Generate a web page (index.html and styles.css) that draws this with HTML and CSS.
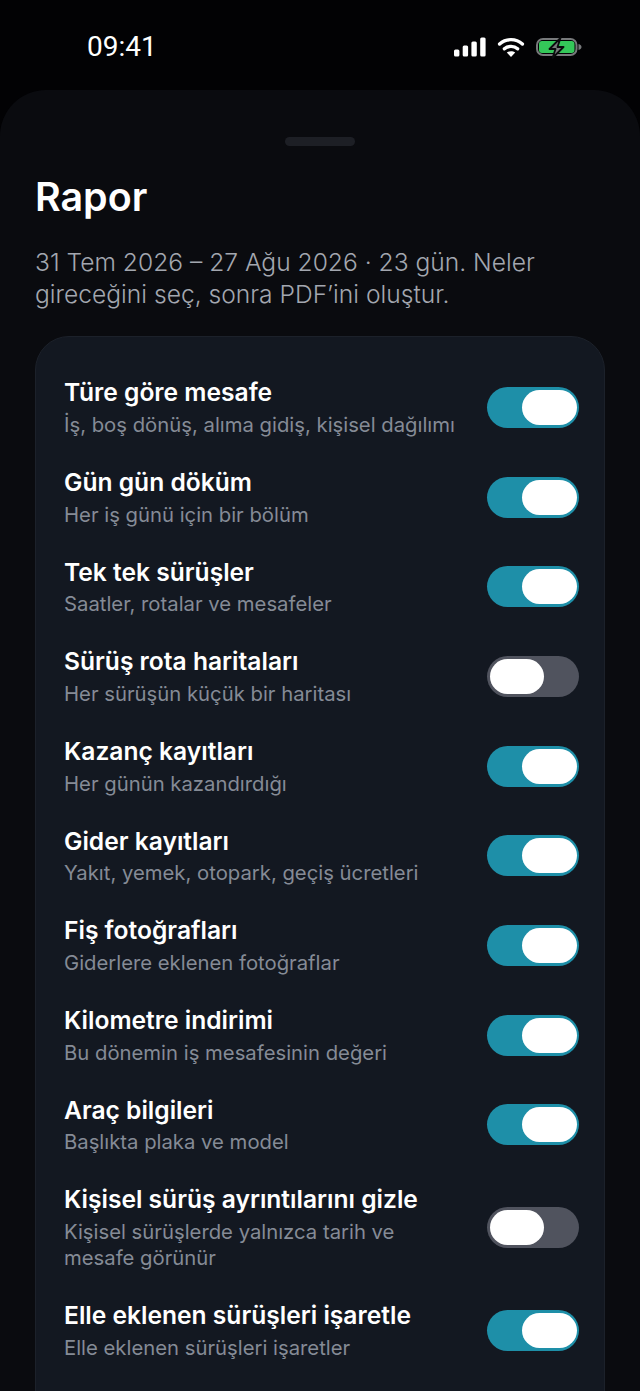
FILE: index.html
```html
<!DOCTYPE html>
<html lang="tr">

<head>
    <meta charset="utf-8">
    <title>Rapor</title>
    <link rel="stylesheet" href="styles.css">
</head>

<body>
    <div class="status-bar">
        <span class="time">09:41</span>
        <div class="status-icons">
            <svg class="ic-signal" width="32" height="20" viewBox="0 0 32 20">
                <rect x="0" y="12.5" width="5.4" height="7" rx="1.5" fill="#fff" />
                <rect x="8.7" y="8.5" width="5.4" height="11" rx="1.5" fill="#fff" />
                <rect x="17.4" y="4.5" width="5.4" height="15" rx="1.5" fill="#fff" />
                <rect x="26.2" y="0.5" width="5.4" height="19" rx="1.5" fill="#fff" />
            </svg>
            <svg class="ic-wifi" width="28" height="20" viewBox="0 0 28 20">
                <path d="M2.6 7 C9 1.2 19 1.2 25.4 7" fill="none" stroke="#fff" stroke-width="3.4" stroke-linecap="round" />
                <path d="M7.4 11.8 C11 8.6 17 8.6 20.6 11.8" fill="none" stroke="#fff" stroke-width="3.4" stroke-linecap="round" />
                <path d="M14 20 L9.8 15.6 C12 13.8 16 13.8 18.2 15.6 Z" fill="#fff" />
            </svg>
            <svg class="ic-battery" width="46" height="22" viewBox="0 0 46 22">
                <rect x="1" y="2" width="39.5" height="16" rx="6" fill="none" stroke="#77797b" stroke-width="2" />
                <rect x="3" y="4" width="35.5" height="12" rx="3" fill="#34c759" />
                <path d="M42.5 7 C44.6 7.5 45.5 8.7 45.5 10 C45.5 11.3 44.6 12.5 42.5 13 Z" fill="#77797b" />
                <path d="M24.5 1 L13.5 12 H19.5 L16.5 21 L27.5 10 H21.5 Z" fill="#77797b" stroke="#0a0b0d" stroke-width="1.8" stroke-linejoin="round" />
            </svg>
        </div>
    </div>

    <div class="sheet">
        <div class="grabber"></div>
        <h1>Rapor</h1>
        <p class="intro">31 Tem 2026 – 27 Ağu 2026 · 23 gün. Neler gireceğini seç, sonra PDF’ini oluştur.</p>

        <div class="card">
            <div class="row">
                <div class="row-text">
                    <div class="row-title">Türe göre mesafe</div>
                    <div class="row-sub">İş, boş dönüş, alıma gidiş, kişisel dağılımı</div>
                </div>
                <div class="toggle on"><span class="knob"></span></div>
            </div>
            <div class="row">
                <div class="row-text">
                    <div class="row-title">Gün gün döküm</div>
                    <div class="row-sub">Her iş günü için bir bölüm</div>
                </div>
                <div class="toggle on"><span class="knob"></span></div>
            </div>
            <div class="row">
                <div class="row-text">
                    <div class="row-title">Tek tek sürüşler</div>
                    <div class="row-sub">Saatler, rotalar ve mesafeler</div>
                </div>
                <div class="toggle on"><span class="knob"></span></div>
            </div>
            <div class="row">
                <div class="row-text">
                    <div class="row-title">Sürüş rota haritaları</div>
                    <div class="row-sub">Her sürüşün küçük bir haritası</div>
                </div>
                <div class="toggle"><span class="knob"></span></div>
            </div>
            <div class="row">
                <div class="row-text">
                    <div class="row-title">Kazanç kayıtları</div>
                    <div class="row-sub">Her günün kazandırdığı</div>
                </div>
                <div class="toggle on"><span class="knob"></span></div>
            </div>
            <div class="row">
                <div class="row-text">
                    <div class="row-title">Gider kayıtları</div>
                    <div class="row-sub">Yakıt, yemek, otopark, geçiş ücretleri</div>
                </div>
                <div class="toggle on"><span class="knob"></span></div>
            </div>
            <div class="row">
                <div class="row-text">
                    <div class="row-title">Fiş fotoğrafları</div>
                    <div class="row-sub">Giderlere eklenen fotoğraflar</div>
                </div>
                <div class="toggle on"><span class="knob"></span></div>
            </div>
            <div class="row">
                <div class="row-text">
                    <div class="row-title">Kilometre indirimi</div>
                    <div class="row-sub">Bu dönemin iş mesafesinin değeri</div>
                </div>
                <div class="toggle on"><span class="knob"></span></div>
            </div>
            <div class="row">
                <div class="row-text">
                    <div class="row-title">Araç bilgileri</div>
                    <div class="row-sub">Başlıkta plaka ve model</div>
                </div>
                <div class="toggle on"><span class="knob"></span></div>
            </div>
            <div class="row">
                <div class="row-text">
                    <div class="row-title">Kişisel sürüş ayrıntılarını gizle</div>
                    <div class="row-sub">Kişisel sürüşlerde yalnızca tarih ve<br>mesafe görünür</div>
                </div>
                <div class="toggle"><span class="knob"></span></div>
            </div>
            <div class="row">
                <div class="row-text">
                    <div class="row-title">Elle eklenen sürüşleri işaretle</div>
                    <div class="row-sub">Elle eklenen sürüşleri işaretler</div>
                </div>
                <div class="toggle on"><span class="knob"></span></div>
            </div>
        </div>
    </div>
</body>

</html>
```

FILE: styles.css
```css
* {
    margin: 0;
    padding: 0;
    box-sizing: border-box;
}

html,
body {
    height: 1391px;
    overflow: hidden;
    background-color: #020204;
}

body {
    font-family: Inter, "Noto Sans", sans-serif;
    color: #fff;
}

.status-bar {
    height: 90px;
    display: flex;
    justify-content: space-between;
    align-items: flex-start;
    padding: 32px 58px 0 87px;
}

.time {
    font-family: Roboto, "Liberation Sans", sans-serif;
    font-size: 28px;
    line-height: 30px;
    font-weight: 400;
}

.status-icons {
    display: flex;
    align-items: flex-start;
    gap: 11px;
    padding-top: 5px;
}

.sheet {
    height: 1301px;
    padding: 47px 35px 0;
    background-color: #0a0b0f;
    border-radius: 46px 46px 0 0;
}

.grabber {
    width: 70px;
    height: 9px;
    margin: 0 auto;
    background-color: #1d1f25;
    border-radius: 5px;
}

h1 {
    margin-top: 28px;
    font-size: 39.4px;
    line-height: 46px;
    font-weight: 600;
}

.intro {
    margin-top: 26px;
    font-size: 24.6px;
    line-height: 32px;
    font-weight: 300;
    color: #a3a7af;
    max-width: 540px;
}

.card {
    margin-top: 26px;
    height: 1100px;
    padding: 25.5px 25px 0 28px;
    background-color: #131821;
    border: 1px solid #1c212a;
    border-radius: 34px;
}

.row {
    display: flex;
    justify-content: space-between;
    align-items: center;
    padding: 13.95px 0;
}

.row-text {
    min-width: 0;
}

.row-title {
    font-size: 24.6px;
    line-height: 32px;
    font-weight: 600;
}

.row-sub {
    font-size: 20.3px;
    line-height: 26.3px;
    font-weight: 400;
    color: #858b96;
    margin-top: 3.5px;
}

.toggle {
    flex: none;
    width: 92px;
    height: 41px;
    padding: 3px;
    display: flex;
    background-color: #50535e;
    border-radius: 21px;
}

.toggle.on {
    justify-content: flex-end;
    padding-right: 2px;
    background-color: #1e8fa8;
}

.knob {
    width: 54px;
    height: 35px;
    background-color: #fff;
    border-radius: 18px;
}

.toggle.on .knob {
    width: 55px;
}
```
